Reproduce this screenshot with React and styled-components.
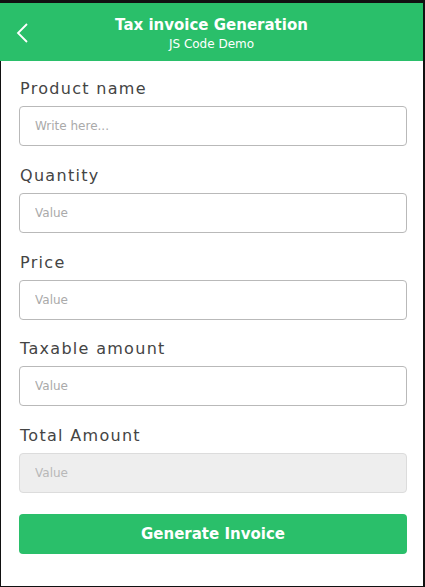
import styled, { createGlobalStyle } from "styled-components";

const Global = createGlobalStyle`
  html, body { margin: 0; padding: 0; background: #fff; }
  * { box-sizing: border-box; }
`;

const fields = [
  { label: "Product name", placeholder: "Write here..." },
  { label: "Quantity", placeholder: "Value" },
  { label: "Price", placeholder: "Value" },
  { label: "Taxable amount", placeholder: "Value" },
  { label: "Total Amount", placeholder: "Value", disabled: true },
];

const App = () => {
  return (
    <Frame>
      <Global />
      <Header>
        <Back aria-label="back">
          <svg width="12" height="20" viewBox="0 0 12 20">
            <path d="M11 1 L2 10 L11 19" fill="none" stroke="#fff" strokeWidth="1.8" />
          </svg>
        </Back>
        <Titles>
          <Title>Tax invoice Generation</Title>
          <Subtitle>JS Code Demo</Subtitle>
        </Titles>
      </Header>
      <Form>
        {fields.map((f) => (
          <Field key={f.label}>
            <Label>{f.label}</Label>
            <Input placeholder={f.placeholder} disabled={f.disabled} />
          </Field>
        ))}
        <Button>Generate Invoice</Button>
      </Form>
    </Frame>
  );
};

const Frame = styled.div`
  width: 425px;
  height: 587px;
  border: 1px solid #111;
  border-top: 3px solid #111;
  border-right: 2px solid #111;
  font-family: "DejaVu Sans", "Open Sans", sans-serif;
  display: flex;
  flex-direction: column;
`;

const Header = styled.div`
  height: 58px;
  background: #2abf6a;
  display: flex;
  align-items: center;
  justify-content: center;
  position: relative;
  margin-left: -1px;
`;

const Back = styled.div`
  position: absolute;
  left: 16px;
  top: 20px;
  display: flex;
`;

const Titles = styled.div`
  display: flex;
  flex-direction: column;
  align-items: center;
  color: #fff;
  margin-top: 2px;
`;

const Title = styled.div`
  font-size: 15px;
  font-weight: 700;
  line-height: 20px;
`;

const Subtitle = styled.div`
  font-size: 12px;
  line-height: 16px;
  margin-top: 1px;
`;

const Form = styled.div`
  padding: 18px 16px 0 18px;
  display: flex;
  flex-direction: column;
`;

const Field = styled.div`
  display: flex;
  flex-direction: column;
  margin-bottom: 19.75px;
`;

const Label = styled.label`
  font-size: 16px;
  letter-spacing: 1.3px;
  color: #444;
  line-height: 20px;
  margin: 0 0 7px 1px;
`;

const Input = styled.input`
  height: 40px;
  border: 1px solid #b9b9b9;
  border-radius: 4px;
  padding: 0 15px;
  font-family: inherit;
  font-size: 12px;
  background: #fff;
  outline: none;
  &::placeholder { color: #aaa; }
  &:disabled {
    background: #eeeeee;
    border-color: #dcdcdc;
  }
  &:disabled::placeholder { color: #b8b8b8; }
`;

const Button = styled.button`
  height: 40px;
  margin-top: 1px;
  border: none;
  border-radius: 4px;
  background: #2abf6a;
  color: #fff;
  font-family: inherit;
  font-size: 15px;
  font-weight: 600;
  cursor: pointer;
`;

export default App;
